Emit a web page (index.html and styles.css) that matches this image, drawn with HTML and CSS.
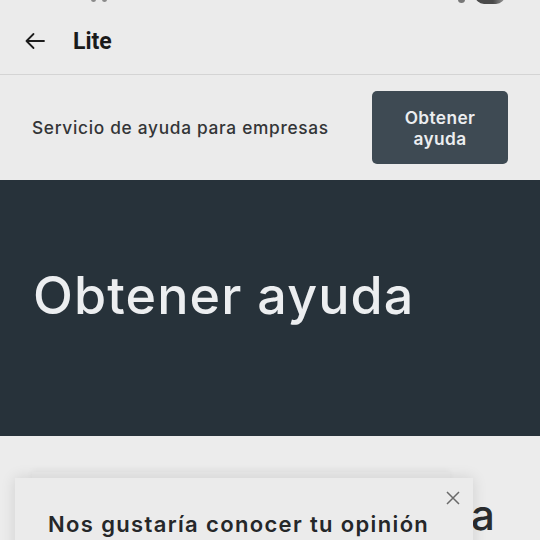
FILE: index.html
```html
<!DOCTYPE html>
<html lang="es">
<head>
<meta charset="utf-8">
<link rel="stylesheet" href="styles.css">
</head>
<body>
<div class="status">
  <span class="st-left"><i></i><i></i></span>
  <span class="st-right"><i class="dot"></i><i class="batt"></i></span>
</div>
<header class="topbar">
  <svg class="back" width="24" height="24" viewBox="0 0 24 24"><path d="M21 12H3.5M10.5 5 3.5 12l7 7" fill="none" stroke="#1c1c1c" stroke-width="1.8" stroke-linecap="round" stroke-linejoin="round"/></svg>
  <span class="app">Lite</span>
</header>
<section class="helpbar">
  <span class="helptext">Servicio de ayuda para empresas</span>
  <button class="helpbtn">Obtener<br>ayuda</button>
</section>
<section class="hero">
  <h1>Obtener ayuda</h1>
</section>
<section class="lower">
  <div class="ghostcard"></div>
  <span class="bigchar">a</span>
  <div class="modal">
    <svg class="close" width="16" height="16" viewBox="0 0 16 16"><path d="M2 2 14 14M14 2 2 14" stroke="#6a6a6a" stroke-width="1.5" fill="none"/></svg>
    <h2>Nos gustaría conocer tu opinión</h2>
  </div>
</section>
</body>
</html>
```
FILE: styles.css
```css
* { box-sizing: border-box; }
html, body { margin: 0; padding: 0; }
body {
  width: 540px;
  height: 540px;
  overflow: hidden;
  background: #ebebeb;
  font-family: Inter, "Noto Sans", sans-serif;
  color: #1c1e21;
}
.status {
  height: 6px;
  position: relative;
}
.st-left i {
  position: absolute;
  top: -3px;
  width: 5px;
  height: 5px;
  border-radius: 50%;
  background: #8a8a8a;
}
.st-left i:first-child { left: 91px; }
.st-left i:last-child { left: 102px; }
.st-right .dot {
  position: absolute;
  top: -4px;
  left: 458px;
  width: 7px;
  height: 7px;
  border-radius: 50%;
  background: #777;
}
.st-right .batt {
  position: absolute;
  top: -14px;
  left: 475px;
  width: 30px;
  height: 18px;
  border-radius: 9px;
  background: linear-gradient(90deg, #4a4a4a 60%, #9a9a9a);
}
.topbar {
  height: 69px;
  display: flex;
  align-items: center;
  padding: 2px 0 0 23px;
  border-bottom: 1px solid #d4d4d4;
}
.back { flex: none; }
.app {
  margin-left: 26px;
  font-family: Roboto, sans-serif;
  font-weight: 700;
  font-size: 23px;
  color: #1a1a1a;
}
.helpbar {
  height: 105px;
  display: flex;
  align-items: center;
  justify-content: space-between;
  padding: 0 32px 0 32px;
}
.helptext {
  font-size: 17.3px;
  font-weight: 550;
  color: #333537;
  letter-spacing: 0.7px;
}
.helpbtn {
  width: 136px;
  height: 73px;
  border: none;
  border-radius: 5px;
  background: #3e4a53;
  color: #eceef0;
  font-family: Inter, sans-serif;
  font-size: 17.3px;
  font-weight: 600;
  letter-spacing: 0.4px;
  line-height: 21px;
  padding: 0;
}
.hero {
  height: 256px;
  background: #27323a;
  display: flex;
  align-items: center;
  padding: 0 33px;
}
.hero h1 {
  margin: 0 0 26px 0;
  font-size: 52px;
  font-weight: 500;
  color: #eceef0;
  letter-spacing: 1.1px;
}
.lower {
  position: relative;
  height: 110px;
  background: #ececec;
}
.ghostcard {
  position: absolute;
  left: 32px;
  top: 36px;
  width: 418px;
  height: 80px;
  background: #eaeaea;
  box-shadow: 0 -2px 6px rgba(0,0,0,0.04);
}
.bigchar {
  position: absolute;
  left: 471px;
  top: 58px;
  font-size: 42px;
  font-weight: 500;
  color: #2a2c2e;
  line-height: 1;
}
.modal {
  position: absolute;
  left: 15px;
  top: 42px;
  width: 458px;
  height: 100px;
  background: #ebebeb;
  box-shadow: 0 0 14px rgba(0,0,0,0.12);
  padding: 33px 0 0 33px;
}
.close {
  position: absolute;
  right: 12px;
  top: 12px;
}
.modal h2 {
  margin: 0;
  font-size: 22px;
  font-weight: 600;
  color: #252729;
  letter-spacing: 1.35px;
}
```
